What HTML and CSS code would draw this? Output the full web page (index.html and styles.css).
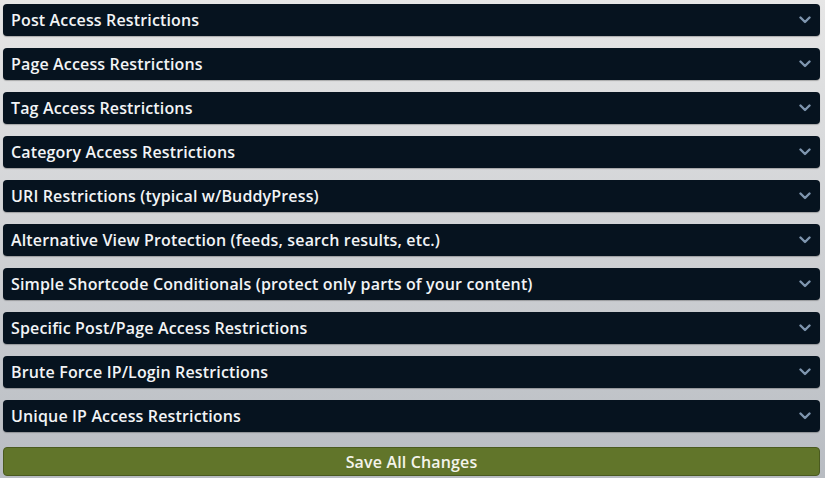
FILE: index.html
```html
<!DOCTYPE html>
<html lang="en">
<head>
  <meta charset="UTF-8" />
  <title>Access Restrictions</title>
  <link rel="stylesheet" href="styles.css">
</head>
<body>
  <div class="panels">
    <div class="panel"><span>Post Access Restrictions</span><svg class="chev" viewBox="0 0 12 8"><path d="M1.5 1.5 L6 6 L10.5 1.5"/></svg></div>
    <div class="panel"><span>Page Access Restrictions</span><svg class="chev" viewBox="0 0 12 8"><path d="M1.5 1.5 L6 6 L10.5 1.5"/></svg></div>
    <div class="panel"><span>Tag Access Restrictions</span><svg class="chev" viewBox="0 0 12 8"><path d="M1.5 1.5 L6 6 L10.5 1.5"/></svg></div>
    <div class="panel"><span>Category Access Restrictions</span><svg class="chev" viewBox="0 0 12 8"><path d="M1.5 1.5 L6 6 L10.5 1.5"/></svg></div>
    <div class="panel"><span>URI Restrictions (typical w/BuddyPress)</span><svg class="chev" viewBox="0 0 12 8"><path d="M1.5 1.5 L6 6 L10.5 1.5"/></svg></div>
    <div class="panel"><span>Alternative View Protection (feeds, search results, etc.)</span><svg class="chev" viewBox="0 0 12 8"><path d="M1.5 1.5 L6 6 L10.5 1.5"/></svg></div>
    <div class="panel"><span>Simple Shortcode Conditionals (protect only parts of your content)</span><svg class="chev" viewBox="0 0 12 8"><path d="M1.5 1.5 L6 6 L10.5 1.5"/></svg></div>
    <div class="panel"><span>Specific Post/Page Access Restrictions</span><svg class="chev" viewBox="0 0 12 8"><path d="M1.5 1.5 L6 6 L10.5 1.5"/></svg></div>
    <div class="panel"><span>Brute Force IP/Login Restrictions</span><svg class="chev" viewBox="0 0 12 8"><path d="M1.5 1.5 L6 6 L10.5 1.5"/></svg></div>
    <div class="panel"><span>Unique IP Access Restrictions</span><svg class="chev" viewBox="0 0 12 8"><path d="M1.5 1.5 L6 6 L10.5 1.5"/></svg></div>
  </div>
  <button class="save" type="button">Save All Changes</button>
</body>
</html>
```

FILE: styles.css
```css
html, body {
  height: 100%;
}
body {
  margin: 0;
  padding: 4px 5px 0 3px;
  box-sizing: border-box;
  font-family: "Open Sans", "Noto Sans", sans-serif;
  background: linear-gradient(#e6e6e6, #d0d2d5 50%, #b8bcc2);
}
.panels {
  display: flex;
  flex-direction: column;
  gap: 12px;
}
.panel {
  display: flex;
  align-items: center;
  justify-content: space-between;
  height: 32px;
  padding: 0 8px 0 8px;
  background: #06131f;
  border-radius: 4px;
  box-shadow: 0 1px 1px rgba(0, 0, 0, 0.25);
  color: #f2f4f6;
  font-size: 16px;
  font-weight: 600;
  letter-spacing: 0.15px;
}
.chev {
  width: 12px;
  height: 8px;
  margin-right: 1px;
}
.chev path {
  fill: none;
  stroke: #7e95ae;
  stroke-width: 2.4;
  stroke-linecap: round;
  stroke-linejoin: round;
}
.save {
  display: block;
  width: 100%;
  height: 29px;
  margin-top: 15px;
  padding: 0;
  background: #61752a;
  border: 1px solid #4a5a1f;
  border-radius: 4px;
  color: #f4f4ea;
  font-family: inherit;
  font-size: 16px;
  font-weight: 600;
  letter-spacing: 0.15px;
  cursor: pointer;
}
```
